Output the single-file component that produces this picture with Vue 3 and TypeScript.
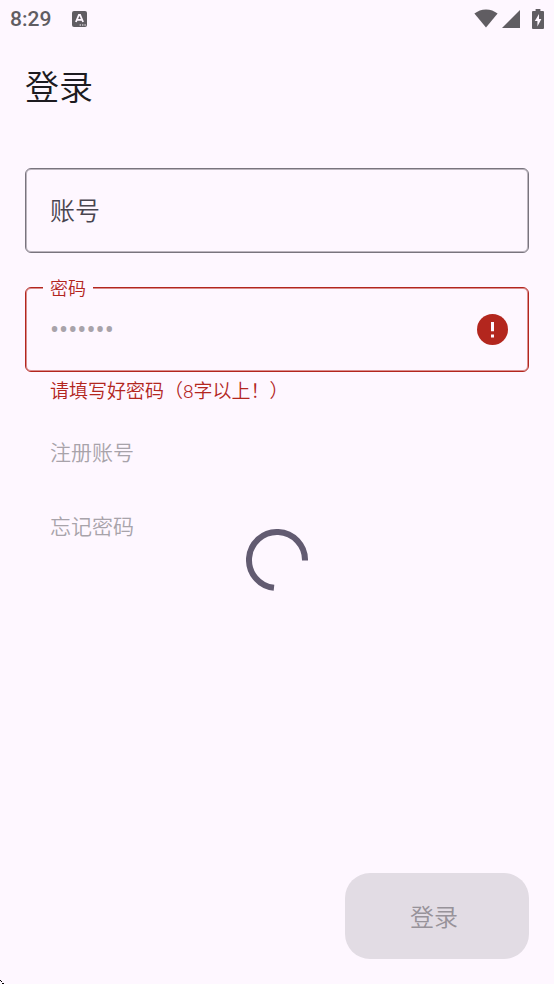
<script setup lang="ts">
import { computed, ref } from 'vue'

const account = ref('')
const password = ref('1234567')
const loading = ref(true)
const passwordInvalid = computed(() => password.value.length < 8)
</script>

<template>
  <div class="screen">
    <header class="status-bar">
      <time class="clock">8:29</time>
      <svg class="notice" viewBox="0 0 15 16" aria-hidden="true">
        <rect width="15" height="16" rx="2" fill="#605d62" />
        <path d="M3.900 11 6.900 3.800h1.200l3 7.200M5 8.800h5" fill="none" stroke="#fef7ff" stroke-width="1.8" />
        <path d="M7.600 14h1.400M10 14h1.400M12.400 14h1.400" stroke="#fef7ff" stroke-width="1.2" />
      </svg>
      <div class="system-icons">
        <svg class="wifi" viewBox="0 0 24 19" aria-hidden="true">
          <path d="M12 18.6 0.4 4.6C3.6 1.9 7.6 0.4 12 0.4s8.4 1.500 11.6 4.200z" />
        </svg>
        <svg class="signal" viewBox="0 0 18 18" aria-hidden="true">
          <path d="M18 0v18H0z" />
        </svg>
        <svg class="battery" viewBox="0 0 12 20" aria-hidden="true">
          <path
            fill-rule="evenodd"
            d="M3.6 0h4.8v2H11a1 1 0 0 1 1 1v16a1 1 0 0 1-1 1H1a1 1 0 0 1-1-1V3a1 1 0 0 1 1-1h2.6zM7 5 2.8 12h2.6v5.4L9.4 10H7z"
          />
        </svg>
      </div>
    </header>

    <div class="app-bar">
      <h1 class="title">登录</h1>
    </div>

    <main class="content">
      <form class="form" @submit.prevent>
        <div class="field" :class="{ filled: account }">
          <input id="account" v-model="account" class="input" type="text" :disabled="loading" />
          <label class="label" for="account">账号</label>
        </div>

        <div class="field filled" :class="{ invalid: passwordInvalid }">
          <input
            id="password"
            v-model="password"
            class="input"
            type="password"
            aria-describedby="password-hint"
            :disabled="loading"
          />
          <label class="label" for="password">密码</label>
          <svg v-if="passwordInvalid" class="error-icon" viewBox="0 0 31 31" aria-hidden="true">
            <circle cx="15.5" cy="15.5" r="15.5" fill="#b3261e" />
            <path d="M14 8h3v9.200h-3zM14 20.400h3v3h-3z" fill="#fef7ff" />
          </svg>
        </div>
        <p id="password-hint" class="hint">请填写好密码（8字以上！）</p>

        <button class="text-button" type="button" :disabled="loading">注册账号</button>
        <button class="text-button" type="button" :disabled="loading">忘记密码</button>

        <button class="submit" type="submit" :disabled="loading">登录</button>
      </form>

      <svg v-if="loading" class="spinner" viewBox="0 0 62 62" role="progressbar" aria-label="登录">
        <path d="M59 31.500A28 28 0 1 0 28 58.840" fill="none" stroke="#625b71" stroke-width="6" />
      </svg>
    </main>

    <svg class="corner" viewBox="0 0 4 4" aria-hidden="true">
      <path d="M0 0h1v1H0zM1 1h1v1H1zM2 3h2v1H2z" />
    </svg>
  </div>
</template>

<style>
body {
  margin: 0;
  background: #fef7ff;
}
</style>

<style scoped>
.screen {
  position: relative;
  box-sizing: border-box;
  display: flex;
  flex-direction: column;
  min-height: 100vh;
  background: #fef7ff;
  color: #1d1b20;
  font-family: Roboto, "Noto Sans CJK SC", sans-serif;
  font-weight: 350;
}

.status-bar {
  display: flex;
  align-items: center;
  height: 37px;
  padding: 0 10px;
  color: #605d62;
}

.clock {
  padding-top: 1px;
  font-size: 21px;
  line-height: 24px;
  font-weight: 500;
}

.notice {
  width: 15px;
  height: 16px;
  margin-left: 21px;
}

.system-icons {
  display: flex;
  align-items: center;
  margin-left: auto;
  fill: #605d62;
}

.wifi {
  width: 24px;
  height: 19px;
}

.signal {
  width: 18px;
  height: 18px;
  margin-left: 4px;
}

.battery {
  width: 12px;
  height: 20px;
  margin-left: 12px;
}

.app-bar {
  display: flex;
  align-items: center;
  box-sizing: border-box;
  height: 98px;
  padding: 4px 25px 0;
}

.title {
  margin: 0;
  font-size: 34px;
  line-height: 44px;
  font-weight: 350;
}

.content {
  position: relative;
  display: flex;
  flex: 1;
  padding: 33px 25px 25px;
}

.form {
  display: flex;
  flex: 1;
  flex-direction: column;
  align-items: flex-start;
  min-width: 0;
}

.field {
  position: relative;
  align-self: stretch;
}

.field + .field {
  margin-top: 34px;
}

.input {
  display: block;
  box-sizing: border-box;
  width: 100%;
  height: 85px;
  padding: 0 66px 0 24px;
  border: 1px solid #79747e;
  border-radius: 6px;
  outline: none;
  background: transparent;
  box-shadow: inset 0 0 0 1px rgb(121 116 126 / 50%);
  color: #a8a3aa;
  font: inherit;
  font-size: 27px;
  font-weight: 400;
}

.label {
  position: absolute;
  top: 28px;
  left: 25px;
  color: #49454f;
  font-size: 25px;
  line-height: 32px;
}

.filled .label {
  top: -10px;
  left: 18px;
  padding: 0 7px;
  background: #fef7ff;
  font-size: 18px;
  line-height: 24px;
}

.invalid .input {
  border-color: #b3261e;
  box-shadow: inset 0 0 0 1px rgb(179 38 30 / 50%);
}

.invalid .label {
  color: #b3261e;
}

.error-icon {
  position: absolute;
  top: 27px;
  right: 21px;
  width: 31px;
  height: 31px;
}

.hint {
  margin: 0;
  padding: 8px 25px 10px;
  color: #b3261e;
  font-size: 19px;
  line-height: 24px;
}

.text-button {
  height: 74px;
  padding: 0 25px;
  border: 0;
  background: none;
  color: #a8a3aa;
  font: inherit;
  font-size: 21px;
}

.submit {
  align-self: flex-end;
  height: 86px;
  margin-top: auto;
  padding: 0 71px 2px 65px;
  border: 0;
  border-radius: 25px;
  background: #e2dce4;
  color: #979299;
  font: inherit;
  font-size: 24px;
}

.spinner {
  position: absolute;
  top: 50%;
  left: 50%;
  width: 62px;
  height: 62px;
  transform: translate(-50%, -50%);
}

.corner {
  position: absolute;
  bottom: 0;
  left: 0;
  width: 4px;
  height: 4px;
}
</style>
